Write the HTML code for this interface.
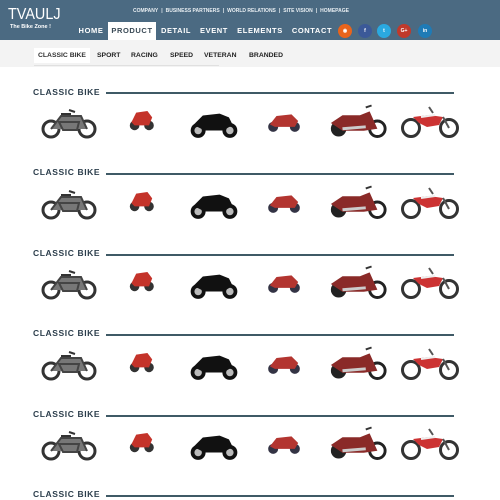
<!DOCTYPE html>
<html><head><meta charset="utf-8"><style>
*{margin:0;padding:0;box-sizing:border-box}
body{width:500px;height:500px;overflow:hidden;background:#fff;font-family:"Liberation Sans",sans-serif;position:relative}
.hdr{position:absolute;left:0;top:0;width:500px;height:40px;background:#4b6a82}
.logo{position:absolute;left:8px;top:6px;color:#fff;font-size:16px;letter-spacing:0;transform:scaleX(0.9);transform-origin:left}
.tag{position:absolute;left:10px;top:24px;color:#fff;font-size:5.5px;font-weight:bold}
.top{position:absolute;top:8px;left:133px;color:#e8eef2;font-size:5px;font-weight:bold;white-space:nowrap}
.top span{margin:0 3px}
.nav{position:absolute;top:22px;left:0;height:18px}
.nav a{position:absolute;top:0;height:18px;line-height:18px;color:#fff;font-size:7.5px;font-weight:bold;letter-spacing:0.6px;text-align:center}
.nav a.on{background:#fff;color:#3a4a56}
.ic{position:absolute;top:24px;width:14px;height:14px;border-radius:50%;color:#fff;font-size:5px;font-weight:bold;text-align:center;line-height:14px}
.sub{position:absolute;top:40px;left:0;width:500px;height:27px;background:#f3f3f3}
.sub span{position:absolute;top:12px;font-size:6.8px;font-weight:bold;color:#222}
.sub .on{background:#fff;top:8px;padding:4px 4px;left:34px;color:#333}
.h{position:absolute;left:33px;font-size:8.5px;font-weight:bold;color:#2c3e4c;letter-spacing:0.6px}
.ln{position:absolute;left:106px;width:348px;height:2px;background:#3f5a66}
svg.b{position:absolute}
</style></head><body>
<svg width="0" height="0" style="position:absolute">
<defs>
<symbol id="b1" viewBox="0 0 60 36"><circle cx="12" cy="25" r="8" fill="none" stroke="#333" stroke-width="3"/><circle cx="48" cy="25" r="8" fill="none" stroke="#333" stroke-width="3"/><path d="M12 25 L22 12 L42 12 L48 25 M20 18 L40 18 L38 26 L24 26Z" fill="#777" stroke="#444" stroke-width="2"/><path d="M30 6 L36 8 M22 10 L32 10" stroke="#333" stroke-width="2"/></symbol>
<symbol id="b2" viewBox="0 0 40 36"><circle cx="12" cy="26" r="6" fill="#333"/><circle cx="30" cy="26" r="6" fill="#333"/><path d="M8 22 L14 10 L28 8 L34 16 L30 26 L12 26Z" fill="#c4332a"/></symbol>
<symbol id="b3" viewBox="0 0 60 36"><circle cx="13" cy="26" r="8" fill="#111"/><circle cx="47" cy="26" r="8" fill="#111"/><circle cx="13" cy="26" r="4" fill="#bbb"/><circle cx="47" cy="26" r="4" fill="#bbb"/><path d="M8 20 L18 10 L36 8 L46 12 L50 20 L40 26 L20 26Z" fill="#111"/></symbol>
<symbol id="b4" viewBox="0 0 50 36"><circle cx="12" cy="25" r="6" fill="#334"/><circle cx="38" cy="25" r="6" fill="#334"/><path d="M8 22 L16 12 L34 10 L42 18 L38 25 L14 25Z" fill="#b33530"/></symbol>
<symbol id="b5" viewBox="0 0 64 36"><circle cx="12" cy="26" r="8" fill="#222"/><circle cx="52" cy="26" r="8" fill="none" stroke="#222" stroke-width="3"/><path d="M4 20 L16 12 L34 12 L44 8 L52 26 L38 28 L16 28Z" fill="#8a2a28"/><path d="M16 26 L40 24" stroke="#ccc" stroke-width="3"/><path d="M40 4 L46 2" stroke="#333" stroke-width="2"/></symbol>
<symbol id="b6" viewBox="0 0 62 36"><circle cx="12" cy="25" r="8.5" fill="none" stroke="#333" stroke-width="3"/><circle cx="50" cy="25" r="8.5" fill="none" stroke="#333" stroke-width="3"/><path d="M14 14 L30 12 L44 14 L40 22 L28 24 L20 20Z" fill="#c33"/><path d="M44 14 L50 25 M30 4 L34 10" stroke="#555" stroke-width="2"/><path d="M22 14 L36 12" stroke="#eee" stroke-width="2"/></symbol>
</defs></svg>
<div class="hdr">
<div class="logo">TVAULJ</div><div class="tag">The Bike Zone !</div>
<div class="top">COMPANY<span>|</span>BUSINESS PARTNERS<span>|</span>WORLD RELATIONS<span>|</span>SITE VISION<span>|</span>HOMEPAGE</div>
<div class="nav">
<a style="left:75px;width:32px">HOME</a>
<a class="on" style="left:108px;width:48px">PRODUCT</a>
<a style="left:158px;width:36px">DETAIL</a>
<a style="left:197px;width:34px">EVENT</a>
<a style="left:235px;width:50px">ELEMENTS</a>
<a style="left:290px;width:44px">CONTACT</a>
</div>
<div class="ic" style="left:338px;background:#e8641c">◉</div>
<div class="ic" style="left:358px;background:#3b5998">f</div>
<div class="ic" style="left:377px;background:#2aa9e0">t</div>
<div class="ic" style="left:397px;background:#c0392b">G+</div>
<div class="ic" style="left:418px;background:#1f7bb6">in</div>
</div>
<div class="sub">
<span class="on">CLASSIC BIKE</span>
<span style="left:97px">SPORT</span>
<span style="left:131px">RACING</span>
<span style="left:170px">SPEED</span>
<span style="left:204px">VETERAN</span>
<span style="left:249px">BRANDED</span>
</div>
<div style="position:absolute;left:34px;top:65px;width:185px;height:1px;background:#e0e0e0"></div>

<div class="h" style="top:87px">CLASSIC BIKE</div><div class="ln" style="top:92px"></div>
<svg class="b" style="left:39px;top:104px" width="60" height="36"><use href="#b1"/></svg>
<svg class="b" style="left:125px;top:104px" width="32" height="30"><use href="#b2"/></svg>
<svg class="b" style="left:186px;top:106px" width="56" height="34"><use href="#b3"/></svg>
<svg class="b" style="left:262px;top:106px" width="44" height="30"><use href="#b4"/></svg>
<svg class="b" style="left:327px;top:103px" width="62" height="36"><use href="#b5"/></svg>
<svg class="b" style="left:399px;top:103px" width="62" height="36"><use href="#b6"/></svg>

<div class="h" style="top:167px">CLASSIC BIKE</div><div class="ln" style="top:173px"></div>
<svg class="b" style="left:39px;top:185px" width="60" height="36"><use href="#b1"/></svg>
<svg class="b" style="left:125px;top:185px" width="32" height="30"><use href="#b2"/></svg>
<svg class="b" style="left:186px;top:187px" width="56" height="34"><use href="#b3"/></svg>
<svg class="b" style="left:262px;top:187px" width="44" height="30"><use href="#b4"/></svg>
<svg class="b" style="left:327px;top:184px" width="62" height="36"><use href="#b5"/></svg>
<svg class="b" style="left:399px;top:184px" width="62" height="36"><use href="#b6"/></svg>

<div class="h" style="top:248px">CLASSIC BIKE</div><div class="ln" style="top:254px"></div>
<svg class="b" style="left:39px;top:265px" width="60" height="36"><use href="#b1"/></svg>
<svg class="b" style="left:125px;top:265px" width="32" height="30"><use href="#b2"/></svg>
<svg class="b" style="left:186px;top:267px" width="56" height="34"><use href="#b3"/></svg>
<svg class="b" style="left:262px;top:267px" width="44" height="30"><use href="#b4"/></svg>
<svg class="b" style="left:327px;top:264px" width="62" height="36"><use href="#b5"/></svg>
<svg class="b" style="left:399px;top:264px" width="62" height="36"><use href="#b6"/></svg>

<div class="h" style="top:328px">CLASSIC BIKE</div><div class="ln" style="top:334px"></div>
<svg class="b" style="left:39px;top:346px" width="60" height="36"><use href="#b1"/></svg>
<svg class="b" style="left:125px;top:346px" width="32" height="30"><use href="#b2"/></svg>
<svg class="b" style="left:186px;top:348px" width="56" height="34"><use href="#b3"/></svg>
<svg class="b" style="left:262px;top:348px" width="44" height="30"><use href="#b4"/></svg>
<svg class="b" style="left:327px;top:345px" width="62" height="36"><use href="#b5"/></svg>
<svg class="b" style="left:399px;top:345px" width="62" height="36"><use href="#b6"/></svg>

<div class="h" style="top:409px">CLASSIC BIKE</div><div class="ln" style="top:415px"></div>
<svg class="b" style="left:39px;top:426px" width="60" height="36"><use href="#b1"/></svg>
<svg class="b" style="left:125px;top:426px" width="32" height="30"><use href="#b2"/></svg>
<svg class="b" style="left:186px;top:428px" width="56" height="34"><use href="#b3"/></svg>
<svg class="b" style="left:262px;top:428px" width="44" height="30"><use href="#b4"/></svg>
<svg class="b" style="left:327px;top:425px" width="62" height="36"><use href="#b5"/></svg>
<svg class="b" style="left:399px;top:425px" width="62" height="36"><use href="#b6"/></svg>

<div class="h" style="top:489px">CLASSIC BIKE</div><div class="ln" style="top:495px"></div>
</body></html>
